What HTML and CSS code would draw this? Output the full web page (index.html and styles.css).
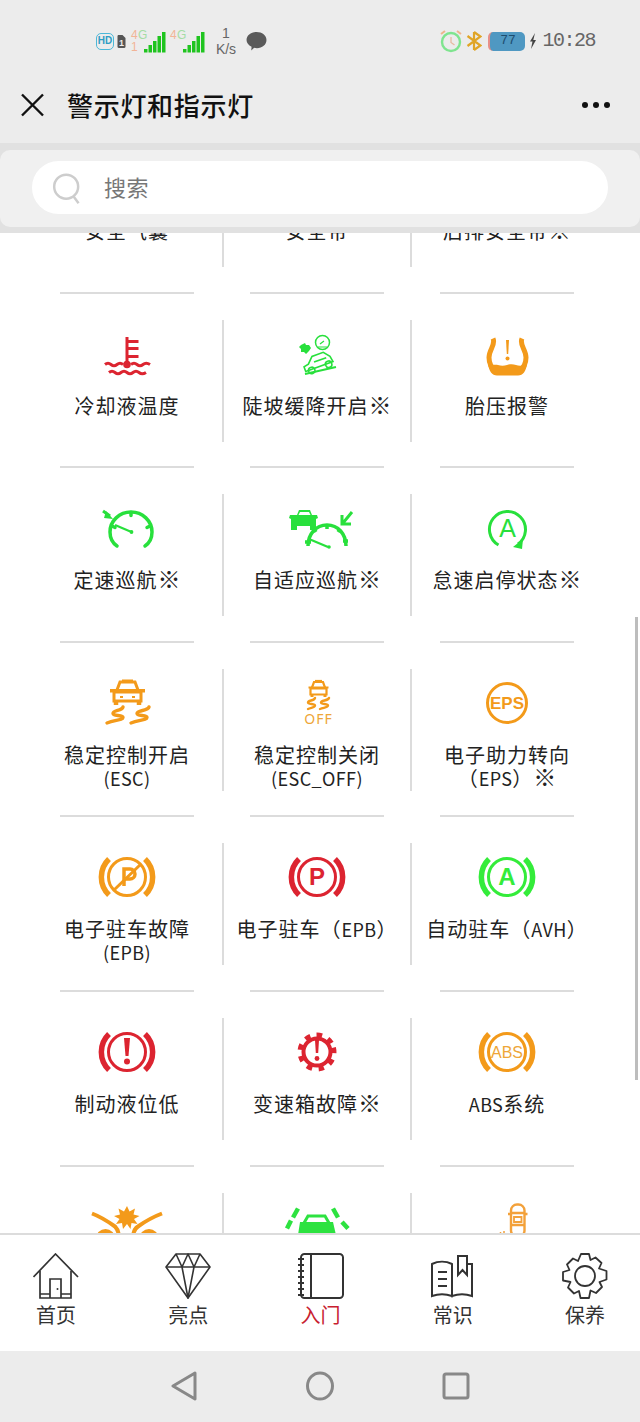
FILE: index.html
```html
<!DOCTYPE html>
<html lang="zh">
<head>
<meta charset="utf-8">
<title>警示灯和指示灯</title>
<link rel="stylesheet" href="styles.css">
</head>
<body>
<div class="app">
  <header class="top">
    <div class="status">
      <div class="status-group">
        <span class="hd">HD</span>
        <svg class="sim" viewBox="0 0 9 13"><path d="M1 0h4.500L8.500 3v8.500a1.500 1.500 0 0 1-1.500 1.500H2a1.500 1.500 0 0 1-1.500-1.500V1z" fill="#555"/><text x="4.500" y="10.500" class="sim-t">1</text></svg>
        <svg class="signal" viewBox="0 0 78 24">
          <text x="1" y="10" class="sig-o">4</text><text x="8" y="10" class="sig-g">G</text><text x="1" y="22" class="sig-o">1</text>
          <path d="M14 20h3.500v3.500H14zM18.500 16H22v7.500h-3.500zM23 12h3.500v11.500H23zM27.500 7H31v16.500h-3.500zM32 3h3.500v20.500H32z" fill="#1fc41f"/>
          <text x="40" y="10" class="sig-o">4</text><text x="47" y="10" class="sig-g">G</text>
          <path d="M53 20h3.500v3.500H53zM57.500 16H61v7.500h-3.500zM62 12h3.500v11.500H62zM66.500 7H70v16.500h-3.500zM71 3h3.500v20.500H71z" fill="#1fc41f"/>
        </svg>
        <span class="speed">1<br>K/s</span>
        <svg class="chat" viewBox="0 0 22 20"><path d="M11 0c6 0 10.500 3.500 10.500 8.500S17 17 11.500 17c-1 0-2 0-3-.3L5.500 19.500l.3-4C2.500 14 .5 11.500.5 8.500.5 3.500 5 0 11 0z" fill="#5a5a5a"/></svg>
      </div>
      <div class="status-group">
        <svg class="alarm" viewBox="0 0 24 24"><circle cx="12" cy="13" r="9" fill="none" stroke="#7fe48f" stroke-width="2.400"/><path d="M12 8v5.500l3.500 2.500" fill="none" stroke="#e8b9a0" stroke-width="1.300"/><path d="M2 5l4-3M22 5l-4-3" stroke="#f0b48c" stroke-width="2"/></svg>
        <svg class="bt" viewBox="0 0 16 20"><path d="M8 1v18M1.500 5L14.500 14.500 8 19M1.500 15L14.500 5.500 8 1" fill="none" stroke="#e0a526" stroke-width="2.200"/></svg>
        <span class="battery"><span class="battery-level">77</span></span>
        <svg class="bolt" viewBox="0 0 8 16"><path d="M6 0L1 8.500h2.500L2 16l5-9H4.300z" fill="#444"/></svg>
        <span class="time">10:28</span>
      </div>
    </div>
    <div class="titlebar">
      <svg class="close" viewBox="0 0 24 24"><path d="M2 1.500l21 21M23 1.500l-21 21" fill="none" stroke="#111" stroke-width="2.400"/></svg>
      <h1 class="title">警示灯和指示灯</h1>
      <div class="more"><i></i><i></i><i></i></div>
    </div>
    <div class="search-strip">
      <div class="search-panel">
        <div class="search">
          <svg class="search-ico" viewBox="0 0 40 46"><circle cx="19" cy="19" r="14.500" fill="none" stroke="#cdcdcd" stroke-width="3"/><path d="M28 31l6 8" stroke="#cdcdcd" stroke-width="3"/></svg>
          <span class="search-text">搜索</span>
        </div>
      </div>
    </div>
  </header>

  <main class="content">
    <div class="grid">
      <div class="cell"><div class="body"><div class="ico"></div><p class="label">安全气囊</p></div><div class="rule-row"><div class="rule"></div></div></div>
      <div class="cell"><div class="body"><div class="ico"></div><p class="label">安全带</p></div><div class="rule-row"><div class="rule"></div></div></div>
      <div class="cell"><div class="body end"><div class="ico"></div><p class="label">后排安全带<span class="mark">※</span></p></div><div class="rule-row"><div class="rule"></div></div></div>

      <div class="cell"><div class="body">
        <svg class="ico" viewBox="0 0 80 56"><g fill="none" stroke="#dc2430" stroke-width="3"><path d="M40 9V36M40 13.500h11.500M40 20.500h11.500M40 28.500h11.500"/><path d="M18 36.500q3-2.500 6 0t6 0 6 0M44 36.500q3-2.500 6 0t6 0 7 0"/><path d="M22 44.500q3-2.500 6 0t6 0 6 0 6 0 6 0 7 0"/></g><circle cx="40" cy="36.500" r="3.800" fill="#dc2430"/></svg>
        <p class="label">冷却液温度</p></div><div class="rule-row"><div class="rule"></div></div></div>
      <div class="cell"><div class="body">
        <svg class="ico" viewBox="0 0 80 56"><circle cx="45.500" cy="14.500" r="7" fill="none" stroke="#28e03c" stroke-width="1.500"/><path d="M43 16l4-3M41 19h9" fill="none" stroke="#28e03c" stroke-width="1.200"/><path d="M24 17l4-2 1 2h3l2 3-2 3-3 3-2-2-3 0 0-3-2-2z" fill="#28e03c"/><g fill="none" stroke="#28e03c" stroke-width="1.600" transform="rotate(-20 43 33)"><path d="M26 38v-5l5-1 6-6h12l5 6 1 6H26z"/><circle cx="32" cy="39" r="3.200"/><circle cx="50" cy="39" r="3.200"/><path d="M37 32h13"/></g><path d="M28 46l31-7" stroke="#28e03c" stroke-width="2"/></svg>
        <p class="label">陡坡缓降开启<span class="mark">※</span></p></div><div class="rule-row"><div class="rule"></div></div></div>
      <div class="cell"><div class="body end">
        <svg class="ico" viewBox="0 0 80 56"><path d="M26 10.500c3 6-4 11-4 19 0 6 3 11 7 14h23c4-3 7-8 7-14 0-8-7-13-4-19" fill="none" stroke="#f39a1a" stroke-width="5"/><path d="M21 36c4 2 7 0 10 1s6 1 9 0 6-1 9 0 7 1 11-1c-1 7-4 11.500-9 11.500H30c-5 0-8-4.500-9-11.500z" fill="#f39a1a"/><path d="M39 12h3l-.8 14h-1.400z" fill="#f39a1a"/><circle cx="40.500" cy="30.500" r="2" fill="#f39a1a"/></svg>
        <p class="label">胎压报警</p></div><div class="rule-row"><div class="rule"></div></div></div>

      <div class="cell"><div class="body">
        <svg class="ico" viewBox="0 0 80 56"><g fill="none" stroke="#28e03c" stroke-width="3.500" stroke-linecap="round"><path d="M30 44C24 40 23 35 23 30a21 20 0 0 1 42 0c0 5-1 10-7 14"/><path d="M44 10.500v3M25 24l3 1.500M63 24l-3 1.500"/></g><path d="M28 23l16.500 7" stroke="#28e03c" stroke-width="2.200"/><circle cx="44.500" cy="30" r="1.900" fill="#28e03c"/><path d="M16 9l7 5" stroke="#28e03c" stroke-width="3"/><path d="M19 9l7 8-9-1z" fill="#28e03c"/></svg>
        <p class="label">定速巡航<span class="mark">※</span></p></div><div class="rule-row"><div class="rule"></div></div></div>
      <div class="cell"><div class="body">
        <svg class="ico" viewBox="0 0 80 56"><path d="M20 13l2-5h11l2 5h5l1 3-2 1v11h-6v-4H20v4h-6V17l-2-1 1-3z" fill="#28e03c"/><path d="M23 10h9l1.500 3h-12z" fill="#fff"/><g fill="none" stroke="#28e03c" stroke-width="3.500"><path d="M31 44c0-12 8-21 19-21s19 9 19 21"/><path d="M50 23v4M37 27l2 3M63 27l-2 3M28 40h6M66 39h5"/></g><path d="M32 37l19 8" stroke="#28e03c" stroke-width="2.200"/><circle cx="52" cy="45" r="1.800" fill="#28e03c"/><path d="M75 10l-9 11M65 13v9h9" fill="none" stroke="#28e03c" stroke-width="3"/></svg>
        <p class="label">自适应巡航<span class="mark">※</span></p></div><div class="rule-row"><div class="rule"></div></div></div>
      <div class="cell"><div class="body end">
        <svg class="ico" viewBox="0 0 80 56"><path d="M31.500 43A18 18 0 1 1 51 42" fill="none" stroke="#28e03c" stroke-width="3"/><path d="M56 37l-1 10-9-2z" fill="#28e03c"/><text x="40.500" y="35" class="svg-a">A</text></svg>
        <p class="label">怠速启停状态<span class="mark">※</span></p></div><div class="rule-row"><div class="rule"></div></div></div>

      <div class="cell"><div class="body">
        <svg class="ico" viewBox="0 0 80 56"><g fill="none" stroke="#f39a1a" stroke-width="3"><path d="M30 13l3-8h15l3 8"/><path d="M35 4h11"/><path d="M27 15h27v9H27z"/><path d="M29 24v4M52 24v4" stroke-width="4.500"/></g><path d="M23 12h35v3.500H23z" fill="#f39a1a"/><path d="M33 19h3v2h-3zM45 19h3v2h-3z" fill="#f39a1a"/><path d="M36 30c-1 4-10 3-10 6.500 0 3 10 1 10 4 0 2.500-8 2.500-16 5.500M62 30c-1 4-12 3-12 6.500 0 3 10 1 10 4 0 2.500-8 2.500-16 5.500" fill="none" stroke="#f39a1a" stroke-width="3.400" stroke-linecap="round"/></svg>
        <p class="label">稳定控制开启<br><span class="lat">(ESC)</span></p></div><div class="rule-row"><div class="rule"></div></div></div>
      <div class="cell"><div class="body">
        <svg class="ico" viewBox="0 0 80 56"><g fill="none" stroke="#f39a1a" stroke-width="2.200"><path d="M35 10.500l2-5.500h9l2 5.500"/><path d="M38 4h7"/><path d="M33.500 11.500h16v6h-16z"/><path d="M35 17.500v2.500M48 17.500v2.500" stroke-width="3"/></g><path d="M31.500 9.500h20v2h-20z" fill="#f39a1a"/><path d="M38 21c-1 3-7 2-7 4.500 0 2 7 1 7 3 0 2-4 2-7 3.500M52 21c-1 3-8 2-8 4.500 0 2 7 1 7 3 0 2-4 2-8 3.500" fill="none" stroke="#f39a1a" stroke-width="2.400" stroke-linecap="round"/><text x="41.500" y="46.500" class="svg-off">OFF</text></svg>
        <p class="label">稳定控制关闭<br><span class="lat">(ESC_OFF)</span></p></div><div class="rule-row"><div class="rule"></div></div></div>
      <div class="cell"><div class="body end">
        <svg class="ico" viewBox="0 0 80 56"><circle cx="40" cy="26" r="19.500" fill="none" stroke="#f39a1a" stroke-width="3"/><text x="40" y="32" class="svg-eps">EPS</text></svg>
        <p class="label">电子助力转向<br>（<span class="lat">EPS</span>）<span class="mark">※</span></p></div><div class="rule-row"><div class="rule"></div></div></div>

      <div class="cell"><div class="body">
        <svg class="ico" viewBox="0 0 80 56"><g fill="none" stroke="#f39a1a"><circle cx="40" cy="26" r="18.500" stroke-width="3"/><path d="M22 8a25 25 0 0 0 0 36M58 8a25 25 0 0 1 0 36" stroke-width="5.500"/><path d="M27 39L54 13" stroke-width="3"/><path d="M37 35V18h6a5 5 0 0 1 0 10h-6" stroke-width="3.500"/></g></svg>
        <p class="label">电子驻车故障<br><span class="lat">(EPB)</span></p></div><div class="rule-row"><div class="rule"></div></div></div>
      <div class="cell"><div class="body">
        <svg class="ico" viewBox="0 0 80 56"><g fill="none" stroke="#dc2430"><circle cx="40" cy="26" r="18.500" stroke-width="3"/><path d="M22 8a25 25 0 0 0 0 36M58 8a25 25 0 0 1 0 36" stroke-width="5.500"/></g><text x="40" y="34" class="svg-letter red">P</text></svg>
        <p class="label">电子驻车（<span class="lat">EPB</span>）</p></div><div class="rule-row"><div class="rule"></div></div></div>
      <div class="cell"><div class="body end">
        <svg class="ico" viewBox="0 0 80 56"><g fill="none" stroke="#34ec3a"><circle cx="40" cy="26" r="18.500" stroke-width="3"/><path d="M22 8a25 25 0 0 0 0 36M58 8a25 25 0 0 1 0 36" stroke-width="5.500"/></g><text x="40" y="34" class="svg-letter green">A</text></svg>
        <p class="label">自动驻车（<span class="lat">AVH</span>）</p></div><div class="rule-row"><div class="rule"></div></div></div>

      <div class="cell"><div class="body">
        <svg class="ico" viewBox="0 0 80 56"><g fill="none" stroke="#dc2430"><circle cx="40" cy="26" r="18.500" stroke-width="3"/><path d="M22 8a25 25 0 0 0 0 36M58 8a25 25 0 0 1 0 36" stroke-width="5.500"/></g><path d="M37 12h6l-1.500 18h-3z" fill="#dc2430"/><circle cx="40" cy="35.500" r="3" fill="#dc2430"/></svg>
        <p class="label">制动液位低</p></div><div class="rule-row"><div class="rule"></div></div></div>
      <div class="cell"><div class="body">
        <svg class="ico" viewBox="0 0 80 56"><circle cx="40" cy="26" r="13.500" fill="none" stroke="#dc2430" stroke-width="4"/><g fill="none" stroke="#dc2430" stroke-width="5" stroke-dasharray="5.500 6.450"><circle cx="40" cy="26" r="17" transform="rotate(-15 40 26)"/></g><path d="M38 14h4l-.8 13h-2.400z" fill="#dc2430"/><circle cx="40" cy="32.500" r="2.400" fill="#dc2430"/></svg>
        <p class="label">变速箱故障<span class="mark">※</span></p></div><div class="rule-row"><div class="rule"></div></div></div>
      <div class="cell"><div class="body end">
        <svg class="ico" viewBox="0 0 80 56"><g fill="none" stroke="#f39a1a"><circle cx="40" cy="26" r="18.500" stroke-width="3"/><path d="M22 8a25 25 0 0 0 0 36M58 8a25 25 0 0 1 0 36" stroke-width="5.500"/></g><text x="40" y="32" class="svg-abs">ABS</text></svg>
        <p class="label"><span class="lat">ABS</span>系统</p></div><div class="rule-row"><div class="rule"></div></div></div>

      <div class="cell"><div class="body">
        <svg class="ico" viewBox="0 0 80 56"><path d="M40 5l2.500 5.500 5.500-3-1.500 6 6 1.500-5.500 3 3.500 5-6-1-1 6-3.500-5-4 5-1-6-6 1 3.500-5-5.500-3 6-1.500-1.500-6 5.500 3z" fill="#f39a1a"/><g fill="none" stroke="#f39a1a" stroke-width="4"><path d="M5 12.500c8 3 16 8 23 13 2 2 3 4 3.500 7M75 12.500c-8 3-17 8-24 13-3 2-4 4-4.500 7"/><circle cx="18.500" cy="37.500" r="7.500"/><circle cx="62" cy="37.500" r="7.500"/></g></svg>
      </div></div>
      <div class="cell"><div class="body">
        <svg class="ico" viewBox="0 0 80 56"><path d="M27 22l4-7h17l4 7" fill="none" stroke="#2de240" stroke-width="3"/><path d="M23 21h33l3 13H21z" fill="#2de240"/><path d="M21 7.500l-5 9M14 19.500l-4 8M56 7.500l5 9M65 21l6 6.500" stroke="#2de240" stroke-width="4.500"/></svg>
      </div></div>
      <div class="cell"><div class="body end">
        <svg class="ico" viewBox="0 0 80 56"><g fill="none" stroke="#f3a13a" stroke-width="2.400"><rect x="44" y="3.500" width="13.500" height="32" rx="6"/><path d="M44 12h13.500M44 24h13.500M41 13h3M57.500 13h3"/><path d="M47 16h7.500v5H47z" stroke-width="1.800"/></g><path d="M37 30v3M33.500 31v2M29 32.500v1" stroke="#f3a13a" stroke-width="1.500"/></svg>
      </div></div>
    </div>
    <div class="scrollbar"></div>
  </main>

  <nav class="tabs">
    <a class="tab">
      <svg class="tab-ico" viewBox="0 0 46 46"><g fill="none" stroke="#333" stroke-width="1.700"><path d="M0.500 24L22.500 1 45 24"/><path d="M7 18v27h31V18"/><path d="M17 45V26h11v19M7 41h10M28 41h10"/></g><circle cx="24.500" cy="36" r="1" fill="#333"/></svg>
      <span class="tab-label">首页</span>
    </a>
    <a class="tab">
      <svg class="tab-ico" viewBox="0 0 46 46"><g fill="none" stroke="#333" stroke-width="1.600" stroke-linejoin="round"><path d="M11 1h24l10 13-22 31L1 14z"/><path d="M1 14h44M11 1l6 13 6 31 6-31 6-13M17 14l6-13 6 13"/></g></svg>
      <span class="tab-label">亮点</span>
    </a>
    <a class="tab">
      <svg class="tab-ico" viewBox="0 0 46 46"><g fill="none" stroke="#333" stroke-width="2"><rect x="3" y="1" width="42" height="44" rx="3.500"/><path d="M13 1v44"/><path d="M0 6h6M0 12h6M0 18h6M0 24h6M0 30h6M0 36h6M0 42h6"/></g></svg>
      <span class="tab-label active">入门</span>
    </a>
    <a class="tab">
      <svg class="tab-ico" viewBox="0 0 46 46"><g fill="none" stroke="#333" stroke-width="2"><path d="M2 43V11c6-3 14-3 20 0v32c-6-2-14-2-20 0zM22 11V43c6-2 14-2 20 0V11h-4"/><path d="M28 11V3h9v19l-4.500-5-4.500 5z" /><path d="M8 19h9M8 26h9M8 33h9" stroke-width="2.200"/></g></svg>
      <span class="tab-label">常识</span>
    </a>
    <a class="tab">
      <svg class="tab-ico" viewBox="0 0 46 46"><g fill="none" stroke="#333" stroke-width="1.800"><circle cx="23" cy="23" r="10"/><path d="M19 1h8l1.500 6 5-2.500 6 5.500-2.500 5.500 7.500 2.500v8.500l-7 2.500 2.500 5-6 6-5.500-2.500-1.500 7.500h-8.500l-1.500-7-5 2.500-6-6 2.500-5.500L1 27.500V19l6.500-2-2.500-5.500 6-6 5 2.500z" stroke-linejoin="round"/></g></svg>
      <span class="tab-label">保养</span>
    </a>
  </nav>

  <footer class="sysnav">
    <svg class="sys-ico" viewBox="0 0 28 30"><path d="M25 2L3 15l22 13z" fill="none" stroke="#888" stroke-width="3" stroke-linejoin="round"/></svg>
    <svg class="sys-ico" viewBox="0 0 28 30"><ellipse cx="14" cy="15" rx="12.500" ry="13" fill="none" stroke="#888" stroke-width="3"/></svg>
    <svg class="sys-ico" viewBox="0 0 28 30"><rect x="2" y="3" width="24" height="24" rx="2" fill="none" stroke="#888" stroke-width="3"/></svg>
  </footer>
</div>
</body>
</html>
```

FILE: styles.css
```css
* { box-sizing: border-box; }

html, body {
  margin: 0;
  padding: 0;
}

body {
  font-family: "Noto Sans CJK SC", "Noto Sans", sans-serif;
  background: #fff;
  color: #222;
}

.app {
  width: 640px;
  height: 1422px;
  display: flex;
  flex-direction: column;
  overflow: hidden;
}

.top {
  background: #ececec;
  flex: none;
}

.status {
  height: 72px;
  padding: 10px 45px 0 96px;
  display: flex;
  justify-content: space-between;
  align-items: center;
}

.status-group {
  display: flex;
  align-items: center;
}

.hd {
  width: 18px;
  height: 17px;
  border: 1.500px solid #4cb8d8;
  border-radius: 5px;
  color: #2f9dc4;
  font: 700 10px/14px "Liberation Sans", sans-serif;
  text-align: center;
}

.sim { width: 9px; height: 13px; margin-left: 3px; }
.sim-t { font: 700 9px "Liberation Sans", sans-serif; fill: #eee; text-anchor: middle; }

.signal { width: 78px; height: 24px; margin-left: 4px; }
.sig-o { font: 12px "Liberation Sans", sans-serif; fill: #f2b497; }
.sig-g { font: 12px "Liberation Sans", sans-serif; fill: #a5dca5; }

.speed {
  width: 30px;
  margin-left: 3px;
  font: 14px/16px "Liberation Sans", sans-serif;
  color: #666;
  text-align: center;
}

.chat { width: 21px; height: 19px; margin-left: 5px; }

.alarm { width: 24px; height: 24px; margin-right: 3px; }
.bt { width: 16px; height: 20px; margin-right: 6px; }

.battery {
  width: 37px;
  height: 19px;
  border-radius: 5px;
  background: #4f98c2;
  border-left: 2px solid #e88f88;
  font: 13px/18px "Liberation Mono", monospace;
  text-align: center;
  color: #1d4d70;
}

.bolt { width: 8px; height: 16px; margin-left: 4px; }

.time {
  margin-left: 5px;
  font: 20px/24px "Liberation Mono", monospace;
  letter-spacing: -1.500px;
  color: #666;
}

.titlebar {
  height: 71px;
  display: flex;
  align-items: center;
  padding: 0 30px 5px 20px;
}

.close { width: 24px; height: 24px; flex: none; }

.title {
  margin: 0 0 0 23px;
  font-size: 26px;
  font-weight: 500;
  line-height: 34px;
  letter-spacing: .7px;
  color: #111;
  flex: 1;
}

.more { display: flex; gap: 5px; }
.more i {
  display: block;
  width: 6px;
  height: 6px;
  border-radius: 50%;
  background: #111;
}

.search-strip {
  background: #e1e1e1;
  padding: 7px 0 6px;
}

.search-panel {
  background: #f0f0f0;
  border-radius: 10px;
  height: 77px;
  padding: 11px 32px 0;
}

.search {
  height: 53px;
  border-radius: 27px;
  background: #fff;
  display: flex;
  align-items: center;
  padding-left: 18px;
}

.search-ico { width: 34px; height: 38px; flex: none; margin-top: 4px; }

.search-text {
  margin-left: 20px;
  margin-bottom: 4px;
  font-size: 22px;
  letter-spacing: .5px;
  color: #777;
}

.content {
  flex: 1;
  min-height: 0;
  position: relative;
  overflow: hidden;
  background: #fff;
}

.grid {
  margin-top: -114px;
  padding-left: 32px;
  display: grid;
  grid-template-columns: 192px 188px 192px;
  grid-auto-rows: 174.600px;
}

.cell {
  padding-top: 26px;
  display: flex;
  flex-direction: column;
  justify-content: space-between;
}

.body {
  height: 122px;
  padding-top: 8px;
  border-right: 2px solid #dcdcdc;
  display: flex;
  flex-direction: column;
  align-items: center;
}

.body.end { border-right-color: transparent; }

.ico {
  display: block;
  flex: none;
  width: 80px;
  height: 56px;
  overflow: visible;
}

.label {
  margin: 10px 0 0;
  font-size: 20px;
  line-height: 23px;
  letter-spacing: 1px;
  text-align: center;
  white-space: nowrap;
  color: #222;
}

.lat {
  font-size: 18px;
  letter-spacing: .4px;
}

.mark {
  font-size: 23px;
  letter-spacing: 0;
  line-height: 20px;
}

.rule-row {
  border-right: 2px solid transparent;
  display: flex;
  justify-content: center;
}

.rule {
  width: 134px;
  height: 2px;
  background: #dcdcdc;
}

.svg-a { font: 25px "Liberation Sans", sans-serif; fill: #28e03c; text-anchor: middle; }
.svg-off { font: 14px "Noto Sans", sans-serif; fill: #eea638; text-anchor: middle; letter-spacing: 1px; }
.svg-eps { font: 700 17px "Liberation Sans", sans-serif; fill: #f39a1a; text-anchor: middle; }
.svg-letter { font: 700 24px "Liberation Sans", sans-serif; text-anchor: middle; }
.svg-letter.red { fill: #dc2430; }
.svg-letter.green { fill: #34ec3a; }
.svg-abs { font: 16px "Liberation Sans", sans-serif; fill: #eea638; text-anchor: middle; }

.scrollbar {
  position: absolute;
  right: 2px;
  top: 384px;
  width: 3px;
  height: 463px;
  background: #bdbdbd;
}

.tabs {
  flex: none;
  height: 118px;
  border-top: 2px solid #dcdcdc;
  background: #fff;
  padding: 18px 32px 0 33px;
  display: flex;
  justify-content: space-between;
}

.tab {
  width: 46px;
  display: flex;
  flex-direction: column;
  align-items: center;
}

.tab-ico { width: 46px; height: 46px; flex: none; }

.tab-label {
  margin-top: 3px;
  font-size: 20px;
  line-height: 26px;
  white-space: nowrap;
  color: #333;
}

.tab-label.active { color: #c8202f; }

.sysnav {
  flex: none;
  height: 71px;
  background: #ececec;
  padding-top: 20px;
  display: flex;
  justify-content: center;
  align-items: flex-start;
  gap: 108px;
}

.sys-ico { width: 28px; height: 30px; }
```
